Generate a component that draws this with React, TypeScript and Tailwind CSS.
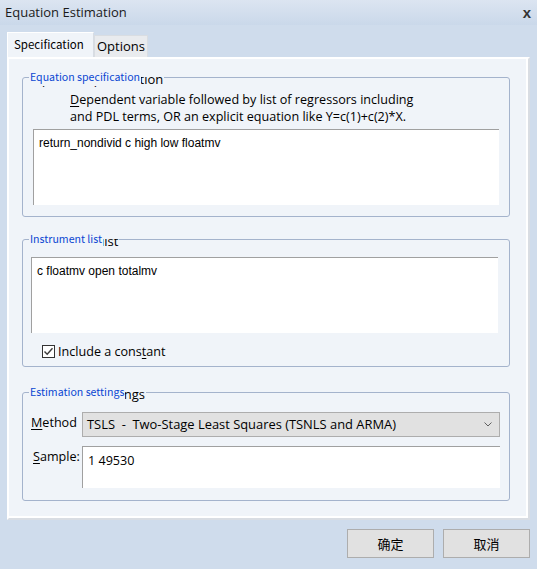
import React from "react";

const panelBg = "bg-[#f0f4f9]";

function GroupHeader({ label }: { label: string }) {
    return (
        <>
            {/* the old black caption peeks out from under the blue one */}
            <div className="absolute left-[7px] top-[-1px] h-[11px] overflow-hidden bg-[#f0f4f9] pr-[1px]">
                <span className="block -mt-[6px] whitespace-nowrap text-[13px] leading-[16px] text-black">
                    {label}
                </span>
            </div>
            <div className="absolute left-[6px] top-[-10px] h-[18px] whitespace-nowrap bg-[#f0f4f9] px-[1px] font-['Noto_Sans_CJK_SC',sans-serif] text-[10.6px] leading-[18px] text-[#0a46d2]">
                {label}
            </div>
        </>
    );
}

function InputBox({
    text,
    className,
}: {
    text: string;
    className: string;
}) {
    return (
        <div
            className={`border-l border-t border-[#a0a0a0] bg-white pl-[5px] pt-[6px] font-['Liberation_Sans',sans-serif] text-[12px] leading-[14px] text-black ${className}`}
        >
            {text}
        </div>
    );
}

function Button({ label }: { label: string }) {
    return (
        <button className="flex h-[29px] w-[87px] items-center justify-center border border-[#adadad] bg-[#e1e1e1] font-['Noto_Sans_CJK_SC',sans-serif] text-[13px] text-black">
            {label}
        </button>
    );
}

export default function App() {
    return (
        <div className="flex h-[569px] w-[537px] flex-col overflow-hidden bg-[#cfdcec] font-['Open_Sans',sans-serif] text-black">
            {/* Title bar */}
            <div className="flex h-[25px] shrink-0 items-center justify-between bg-gradient-to-b from-[#dce5f1] to-[#cad8ea] pl-[5px] pr-[6px]">
                <span className="text-[13px] leading-none text-[#1a1a1a]">
                    Equation Estimation
                </span>
                <span className="font-['Liberation_Sans',sans-serif] text-[15px] font-bold leading-none text-[#333]">
                    x
                </span>
            </div>

            {/* Tabs */}
            <div className="mt-[8px] flex h-[24px] items-end pl-[7px]">
                <div
                    className={`relative z-10 h-[25px] w-[87px] border-l border-t border-white border-r border-r-[#d7dce3] ${panelBg} pl-[6px] pt-[3px] font-['Noto_Sans_CJK_SC',sans-serif] text-[11.5px] leading-[16px]`}
                >
                    Specification
                </div>
                <div className="flex h-[22px] w-[54px] items-center justify-center border border-b-0 border-[#d9dde2] bg-[#e9ebee] text-[13px]">
                    Options
                </div>
            </div>

            {/* Tab panel */}
            <div
                className={`mx-[7px] h-[463px] border-2 border-l-white border-t-white border-r-[#d9dde3] border-b-[#d9dde3] ${panelBg} pl-[13px] pr-[18px] pt-[18px] shadow-[inset_-2px_-2px_0_#ffffff]`}
            >
                {/* Equation specification */}
                <div className="relative flex h-[140px] flex-col rounded-[3px] border border-[#a4b3cc]">
                    <GroupHeader label="Equation specification" />
                    <div className="mt-[13px] pl-[47px] text-[12.6px] leading-[17px]">
                        <div>
                            <span className="underline underline-offset-2">D</span>
                            ependent variable followed by list of regressors including
                        </div>
                        <div>
                            and PDL terms, OR an explicit equation like Y=c(1)+c(2)*X.
                        </div>
                    </div>
                    <InputBox
                        text="return_nondivid c high low floatmv"
                        className="ml-[10px] mt-[4px] h-[76px] w-[466px]"
                    />
                </div>

                {/* Instrument list */}
                <div className="relative mt-[22px] flex h-[128px] flex-col rounded-[3px] border border-[#a4b3cc]">
                    <GroupHeader label="Instrument list" />
                    <InputBox
                        text="c floatmv open totalmv"
                        className="ml-[8px] mt-[17px] h-[76px] w-[467px]"
                    />
                    <div className="ml-[19px] mt-[12px] flex items-center gap-[3px] text-[12.6px] leading-[13px]">
                        <div className="flex h-[13px] w-[13px] items-center justify-center border border-[#333] bg-white">
                            <svg width="11" height="11" viewBox="0 0 11 11">
                                <polyline
                                    points="1.5,5.5 4.2,8.3 9.5,2.2"
                                    fill="none"
                                    stroke="#3c3c3c"
                                    strokeWidth="1.4"
                                />
                            </svg>
                        </div>
                        <span>
                            Include a cons
                            <span className="underline underline-offset-2">t</span>
                            ant
                        </span>
                    </div>
                </div>

                {/* Estimation settings */}
                <div className="relative mt-[25px] flex h-[109px] flex-col rounded-[3px] border border-[#a4b3cc]">
                    <GroupHeader label="Estimation settings" />
                    <div className="mt-[19px] flex items-center">
                        <span className="w-[59px] pl-[8px] text-[12.6px] leading-[16px] -mt-[4px]">
                            <span className="underline underline-offset-2">M</span>
                            ethod
                        </span>
                        <div className="flex h-[25px] w-[418px] items-center justify-between border border-[#adadad] bg-[#e1e1e1] pl-[4px] pr-[7px] text-[12.9px] whitespace-pre">
                            <span>TSLS  -  Two-Stage Least Squares (TSNLS and ARMA)</span>
                            <svg width="8" height="5" viewBox="0 0 8 5">
                                <polyline
                                    points="0.5,0.5 4,4 7.5,0.5"
                                    fill="none"
                                    stroke="#606060"
                                    strokeWidth="1"
                                />
                            </svg>
                        </div>
                    </div>
                    <div className="mt-[9px] flex items-start">
                        <span className="w-[59px] pl-[10px] pt-[3px] text-[12.6px] leading-[16px]">
                            <span className="underline underline-offset-2">S</span>
                            ample:
                        </span>
                        <div className="h-[42px] w-[418px] border-l border-t border-[#a0a0a0] bg-white pl-[5px] pt-[6px] text-[12.6px] leading-[16px]">
                            1 49530
                        </div>
                    </div>
                </div>
            </div>

            {/* Buttons */}
            <div className="mt-[9px] flex justify-end gap-[9px] pr-[7px]">
                <Button label="确定" />
                <Button label="取消" />
            </div>
        </div>
    );
}
